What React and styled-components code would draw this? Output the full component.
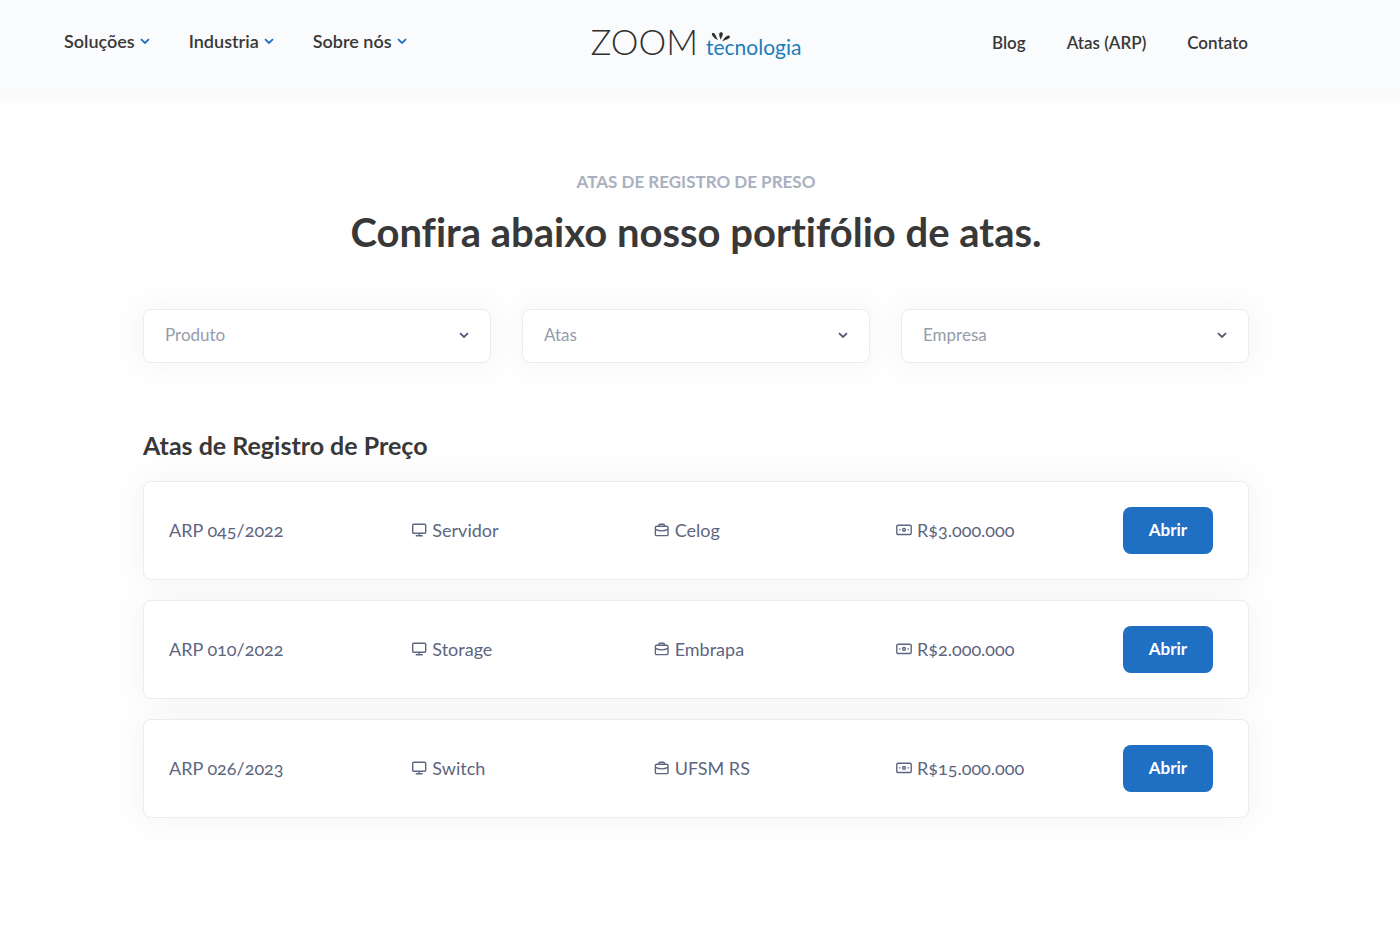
import React from "react";
import styled, { createGlobalStyle } from "styled-components";

const GlobalStyle = createGlobalStyle`
  *, *::before, *::after { box-sizing: border-box; }
  body {
    margin: 0;
    background: #fefefe;
    color: #383838;
    font-family: Lato, "Liberation Sans", sans-serif;
    font-size: 17px;
    line-height: 24px;
  }
`;

const Header = styled.header`
  display: grid;
  grid-template-columns: 1fr auto 1fr;
  align-items: start;
  height: 91px;
  padding: 0 72px 0 64px;
  background: #fafbfd;
  box-shadow: 0 1px 4px 10px #fafafa;
`;

const Nav = styled.nav`
  display: flex;
`;

const MenuNav = styled(Nav)`
  gap: 39px;
  padding-top: 29px;
  font-size: 18px;
`;

const SideNav = styled(Nav)`
  justify-content: flex-end;
  gap: 41px;
  padding: 31px 80px 0 0;
`;

const NavLink = styled.a`
  display: flex;
  align-items: center;
  gap: 5px;
  color: #383838;
  font-weight: 600;
  text-decoration: none;
  white-space: nowrap;
`;

const LogoLink = styled.a`
  display: flex;
  align-items: flex-end;
  gap: 8px;
  padding-top: 19px;
  text-decoration: none;
`;

const LogoName = styled.span`
  color: #303030;
  font-size: 35px;
  font-weight: 300;
  line-height: 44px;
`;

const LogoSuffix = styled.span`
  position: relative;
  color: #1c7db8;
  font-size: 21px;
  line-height: 32px;
`;

const Spark = styled.svg`
  position: absolute;
  left: 5px;
  top: 0;
`;

const Page = styled.div`
  padding: 0 151px 0 143px;
`;

const Main = styled.main`
  max-width: 1106px;
  margin: 0 auto;
  padding: 79px 0 64px;
`;

const Eyebrow = styled.p`
  margin: 0;
  color: #a9b0c0;
  font-weight: 700;
  text-align: center;
  text-transform: uppercase;
`;

const Title = styled.h1`
  margin: 14px 0 0;
  font-size: 40px;
  font-weight: 700;
  font-variant-ligatures: none;
  line-height: 48px;
  text-align: center;
`;

const Filters = styled.form`
  display: grid;
  grid-template-columns: repeat(3, 1fr);
  gap: 31px;
  margin-top: 53px;
`;

const Field = styled.label`
  position: relative;
  display: block;
`;

const Select = styled.select`
  appearance: none;
  display: block;
  width: 100%;
  height: 54px;
  padding: 0 48px 4px 21px;
  border: 1px solid #e8ecf4;
  border-radius: 8px;
  background: #fff;
  box-shadow: 0 0 28px rgba(60, 60, 70, 0.05);
  color: #959cab;
  font-family: inherit;
  font-size: 17px;
`;

const FieldArrow = styled.span`
  position: absolute;
  top: 14px;
  right: 22px;
  display: flex;
  height: 24px;
  align-items: center;
  color: #4f5872;
  pointer-events: none;
`;

const SectionTitle = styled.h2`
  margin: 66px 0 0;
  font-size: 25px;
  font-weight: 700;
  line-height: 32px;
`;

const Records = styled.ul`
  display: grid;
  gap: 20px;
  margin: 20px 0 0;
  padding: 0;
  list-style: none;
`;

const Record = styled.li`
  display: grid;
  grid-template-columns: repeat(3, 1fr) 227px auto;
  align-items: center;
  padding: 25px 35px 25px 25px;
  border: 1px solid #e8ecf4;
  border-radius: 8px;
  background: #fff;
  box-shadow: 0 0 28px rgba(60, 60, 70, 0.05);
  color: #5d6680;
  font-size: 18px;
  font-variant-numeric: oldstyle-nums;
`;

const Cell = styled.span`
  display: flex;
  align-items: center;
  gap: 5px;
  padding-bottom: 2px;
`;

const OpenButton = styled.button`
  width: 90px;
  height: 47px;
  padding: 0 0 2px;
  border: 0;
  border-radius: 8px;
  background: #1f6fc3;
  color: #fff;
  font-family: inherit;
  font-size: 17px;
  font-weight: 700;
  cursor: pointer;
`;

const Arrow = ({ color = "currentColor" }) => (
  <svg width="10" height="10" viewBox="0 0 10 10" fill="none" stroke={color} strokeWidth="1.8" aria-hidden="true">
    <path d="M1 3.2l4 3.8 4-3.8" />
  </svg>
);

const iconProps = {
  width: 16,
  height: 16,
  viewBox: "0 0 16 16",
  fill: "none",
  stroke: "currentColor",
  strokeWidth: 1.4,
  strokeLinejoin: "round",
  "aria-hidden": true,
};

const MonitorIcon = () => (
  <svg {...iconProps}>
    <rect x="1.7" y="2.2" width="13" height="9" rx="1" />
    <path d="M8.2 11.2v2.4M4.7 13.7h7" />
  </svg>
);

const BriefcaseIcon = () => (
  <svg {...iconProps}>
    <rect x="1.4" y="4.3" width="12.6" height="9.3" rx="1.2" />
    <path d="M5 4.3V3.2q0-.9.9-.9h3.6q.9 0 .9.9v1.1M1.4 7.4q6.3 3 12.6 0" />
  </svg>
);

const MoneyIcon = () => (
  <svg {...iconProps}>
    <rect x="0.8" y="3.3" width="14.4" height="9.2" rx="1.2" />
    <circle cx="8" cy="7.9" r="1.4" />
    <path d="M3 7.9h1.4M11.6 7.9H13" />
  </svg>
);

const menus = ["Soluções", "Industria", "Sobre nós"];
const links = ["Blog", "Atas (ARP)", "Contato"];
const filters = ["Produto", "Atas", "Empresa"];
const records = [
  { id: "ARP 045/2022", product: "Servidor", company: "Celog", value: "R$3.000.000" },
  { id: "ARP 010/2022", product: "Storage", company: "Embrapa", value: "R$2.000.000" },
  { id: "ARP 026/2023", product: "Switch", company: "UFSM RS", value: "R$15.000.000" },
];

export default function App() {
  return (
    <>
      <GlobalStyle />
      <Header>
        <MenuNav aria-label="Principal">
          {menus.map((m) => (
            <NavLink href="#" key={m}>
              {m}
              <Arrow color="#1f6fc3" />
            </NavLink>
          ))}
        </MenuNav>
        <LogoLink href="#">
          <LogoName>ZOOM</LogoName>
          <LogoSuffix>
            <Spark width="20" height="11" viewBox="0 0 20 11" fill="#303030" aria-hidden="true">
              <path d="M1 2.2Q2.800 1 4.200 3.400L7 9.200Q3 7.600 1.600 5 .3 3 1 2.200zM9.300 1.300q2.900-.6 2.600 2.200L9.700 8.700Q8.200 5.600 8.200 3.400q0-1.600 1.100-2.100zM18.500 4.800q1.300 1.700-.9 3L11.200 10.200q2.200-3.900 4.600-5.200 1.800-.9 2.700-.2z" />
            </Spark>
            tecnologia
          </LogoSuffix>
        </LogoLink>
        <SideNav aria-label="Links">
          {links.map((l) => (
            <NavLink href="#" key={l}>{l}</NavLink>
          ))}
        </SideNav>
      </Header>
      <Page>
        <Main>
          <Eyebrow>Atas de registro de preso</Eyebrow>
          <Title>Confira abaixo nosso portifólio de atas.</Title>
          <Filters>
            {filters.map((f) => (
              <Field key={f}>
                <Select aria-label={f} defaultValue="">
                  <option value="">{f}</option>
                </Select>
                <FieldArrow><Arrow /></FieldArrow>
              </Field>
            ))}
          </Filters>
          <SectionTitle>Atas de Registro de Preço</SectionTitle>
          <Records>
            {records.map((r) => (
              <Record key={r.id}>
                <Cell>{r.id}</Cell>
                <Cell><MonitorIcon />{r.product}</Cell>
                <Cell><BriefcaseIcon />{r.company}</Cell>
                <Cell><MoneyIcon />{r.value}</Cell>
                <OpenButton type="button">Abrir</OpenButton>
              </Record>
            ))}
          </Records>
        </Main>
      </Page>
    </>
  );
}
